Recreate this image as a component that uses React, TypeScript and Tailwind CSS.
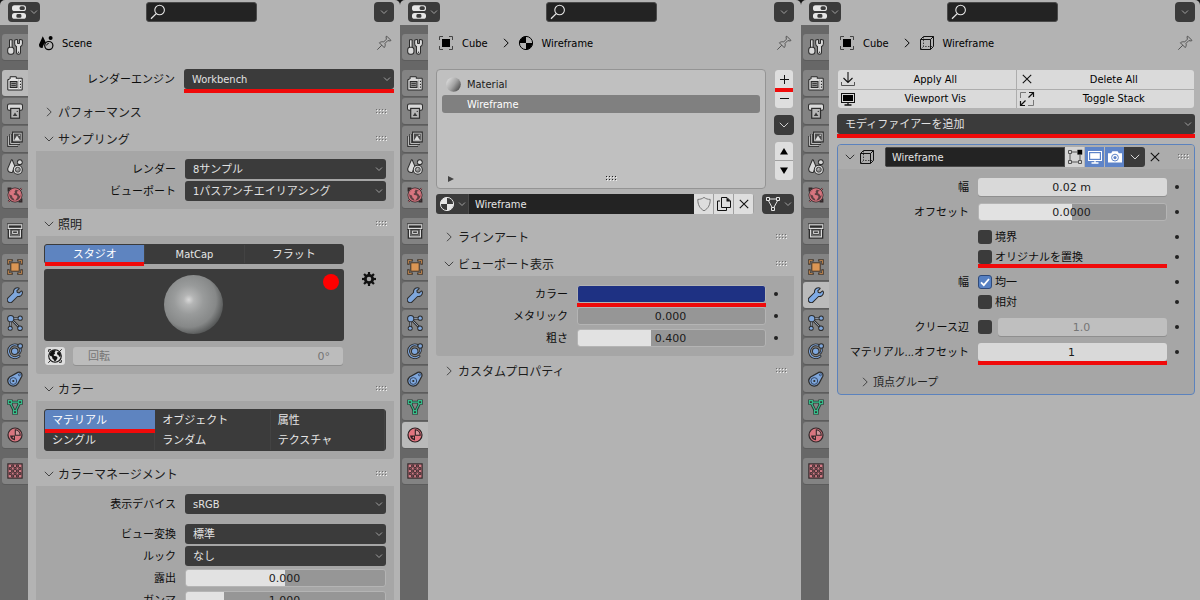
import { useId, useState } from "react";
import type { ReactNode } from "react";

/* ---------- drawings ---------- */

function Svg({ children, size = 16, className = "" }: { children: ReactNode; size?: number; className?: string }) {
  return (
    <svg width={size} height={size} viewBox="0 0 16 16" fill="none" className={"shrink-0 " + className} aria-hidden="true">
      {children}
    </svg>
  );
}

function Chevron({ dir = "down", className = "" }: { dir?: "down" | "right"; className?: string }) {
  return (
    <svg width="10" height="10" viewBox="0 0 10 10" fill="none" stroke="currentColor" strokeWidth="1" className={"shrink-0 " + className} aria-hidden="true">
      <path d={dir === "down" ? "M0.8 2.8 5 7 9.2 2.8" : "M3 0.8 7.2 5 3 9.2"} />
    </svg>
  );
}

function SmallChevron({ className = "" }: { className?: string }) {
  return (
    <svg width="8" height="8" viewBox="0 0 8 8" fill="none" stroke="#a0a0a0" strokeWidth="1" className={"pointer-events-none shrink-0 " + className} aria-hidden="true">
      <path d="M1 2.5 4 5.5 7 2.5" />
    </svg>
  );
}

function Grip({ dark = false }: { dark?: boolean }) {
  const xs = [0, 3, 6, 9];
  return (
    <svg width="12" height="6" viewBox="0 0 12 6" className="shrink-0" aria-hidden="true">
      {xs.map((x) => (
        <g key={x}>
          <rect x={x} y="0" width="1" height="1" fill={dark ? "#222" : "#707070"} />
          <rect x={x} y="3" width="1" height="1" fill={dark ? "#222" : "#707070"} />
          <rect x={x + 1} y="1" width="1" height="1" fill="#f2f2f2" />
          <rect x={x + 1} y="4" width="1" height="1" fill="#f2f2f2" />
        </g>
      ))}
    </svg>
  );
}

const wrench =
  "M10.2 1.2C8 1.4 6.6 3.4 7.1 5.6L1.4 11.2C.5 12.2.6 13.6 1.5 14.5S3.9 15.4 4.8 14.5L10.4 8.9C12.7 9.4 14.8 8 15 5.7L14.6 4.4 12.2 6.4 9.8 5.8 9.3 3.5 11.6 1.4Z";

const globeLand =
  "M2.2 6.4 4.2 3.4 6.8 2 9 2.6 7.6 4.2 8 5.8 6.4 7 7.4 8 9.4 8.2 10.6 9.8 9.4 12 7.8 13.8 6.8 11.8 5.4 10.6 5 8.6 3.4 8ZM10.2 4.2 12.4 4 13.8 6.4 13.6 8.6 12.2 8.8 11.4 7 10 6.2Z";

function OutlinedGroup({ fill, children }: { fill: string; children: ReactNode }) {
  return (
    <g fill={fill} stroke="#242424" strokeWidth="2" strokeLinejoin="round" style={{ paintOrder: "stroke" }}>
      {children}
    </g>
  );
}

const tabIcons: Record<string, ReactNode> = {
  tool: (
    <OutlinedGroup fill="#e4e4e4">
      <path d="M3 1.2H4.6V8.4H3Z" />
      <rect x="1.2" y="8.8" width="5.2" height="6" rx="2" />
      <path d="M8.2 1.4V4.6C8.2 5.9 9 6.8 10 7.2V13.6C10 15.2 13 15.2 13 13.6V7.2C14 6.8 14.9 5.9 14.9 4.6V1.4L13 1V4.4L12.2 5H10.8L10 4.4V1Z" />
      <circle cx="11.5" cy="13.2" r=".7" fill="#242424" stroke="none" />
    </OutlinedGroup>
  ),
  render: (
    <>
      <OutlinedGroup fill="#e4e4e4">
        <path d="M1.3 5.2 3.6 3.8V2.2H8.8V3.8H14.7V14.6H1.3Z" />
      </OutlinedGroup>
      <path d="M11.6 4.4V14.4" stroke="#b0b0b0" strokeWidth=".8" />
      <rect x="3.2" y="6.5" width="6.8" height="6" fill="#8e8e8e" stroke="#242424" />
      <path d="M4.4 8.5H8.8M4.4 10.5H8.8" stroke="#242424" strokeWidth=".8" />
      <path d="M12.9 6.4H14M12.9 9.4H14M12.9 12.2H14" stroke="#242424" strokeWidth="1.2" />
    </>
  ),
  output: (
    <>
      <OutlinedGroup fill="#e4e4e4">
        <rect x="1" y="1.5" width="14" height="5.2" rx="1.2" />
      </OutlinedGroup>
      <rect x="3.7" y="5.4" width="8.8" height="9.8" fill="#bdbdbd" stroke="#242424" strokeWidth="1.2" />
      <path d="M5.8 13 8 9.6 10.4 13Z" fill="#333" />
      <circle cx="10.3" cy="8.4" r=".7" fill="#333" />
    </>
  ),
  viewlayer: (
    <>
      <path d="M1.6 5V14.6H11M3.7 3V12.6H13" stroke="#242424" strokeWidth="2.6" />
      <path d="M1.6 5.2V14.6H10.8M3.7 3.2V12.6H12.8" stroke="#e4e4e4" strokeWidth=".9" />
      <rect x="5.6" y="1.1" width="9.6" height="9.8" fill="#e4e4e4" stroke="#242424" strokeWidth="1.2" />
      <rect x="7" y="2.5" width="6.8" height="7" fill="#444" />
      <path d="M7 9.5 10 4.4 13.2 9.5Z" fill="#e4e4e4" />
      <circle cx="12.2" cy="4.2" r=".8" fill="#e4e4e4" />
    </>
  ),
  scene: (
    <>
      <OutlinedGroup fill="#e4e4e4">
        <path d="M4.8 1.2 1.2 9.8C1 12.4 3 13.2 5 13 6 10 7 8.6 7.6 7.8Z" />
        <circle cx="12.8" cy="3.2" r="1.9" />
        <circle cx="10.8" cy="10.7" r="4" />
      </OutlinedGroup>
      <circle cx="10.8" cy="10.7" r="2.5" fill="#8e8e8e" stroke="#333" strokeWidth=".9" />
      <path d="M9.6 10.6 11.2 9.4" stroke="#e4e4e4" />
    </>
  ),
  world: (
    <>
      <path d="M1.3 14.7 3.4 12.7M14.7 1.3 12.6 3.4M14.5 11.6V14.5H11.6M1.5 4.4V1.5H4.4" stroke="#2b2022" strokeWidth="1.8" />
      <circle cx="8" cy="8" r="6.6" fill="#5c3a3e" stroke="#2b2022" strokeWidth="1.8" />
      <circle cx="8" cy="8" r="6.2" stroke="#e2747f" strokeWidth="1.2" />
      <path d={globeLand} fill="#e2747f" />
      <path d="M1.3 14.7 3.4 12.7M14.7 1.3 12.6 3.4" stroke="#e2747f" strokeWidth=".9" />
    </>
  ),
  collection: (
    <>
      <path d="M2.2 6.5V14.3H13.8V6.5" stroke="#242424" strokeWidth="3" />
      <rect x="1.2" y="1.8" width="13.6" height="3.6" stroke="#242424" strokeWidth="2.8" />
      <path d="M2.6 6.6V13.8H13.4V6.6" stroke="#e4e4e4" strokeWidth="1.2" />
      <rect x="1.2" y="1.8" width="13.6" height="3.6" fill="#242424" stroke="#e4e4e4" strokeWidth="1.2" />
      <rect x="5.6" y="8" width="4.8" height="2.4" stroke="#242424" strokeWidth="2.4" />
      <rect x="5.6" y="8" width="4.8" height="2.4" stroke="#e4e4e4" />
    </>
  ),
  object: (
    <>
      <path d="M1.4 4.6V1.4H4.6M11.4 1.4H14.6V4.6M14.6 11.4V14.6H11.4M4.6 14.6H1.4V11.4" stroke="#3a2c20" strokeWidth="2.4" strokeLinecap="square" />
      <path d="M1.4 4.6V1.4H4.6M11.4 1.4H14.6V4.6M14.6 11.4V14.6H11.4M4.6 14.6H1.4V11.4" stroke="#d8924f" strokeWidth=".9" />
      <rect x="3.8" y="3.8" width="8.4" height="8.4" fill="#e6994f" stroke="#3a2c20" strokeWidth="1" />
    </>
  ),
  modifier: (
    <OutlinedGroup fill="#7fabe6">
      <path d={wrench} />
    </OutlinedGroup>
  ),
  particles: (
    <>
      <path d="M3.6 3.6 13.2 3.2M3.6 3.6 3.2 13M3.6 3.6 13 13.2" stroke="#242424" strokeWidth="2.4" />
      <path d="M3.6 3.6 13.2 3.2M3.6 3.6 3.2 13M3.6 3.6 13 13.2" stroke="#a8b8d0" strokeWidth=".9" />
      <OutlinedGroup fill="#7fabe6">
        <circle cx="3.7" cy="3.7" r="2.6" />
        <circle cx="13.2" cy="3.2" r="1.6" />
        <circle cx="3.2" cy="13.2" r="1.5" />
        <circle cx="13" cy="13.2" r="1.8" />
      </OutlinedGroup>
    </>
  ),
  physics: (
    <>
      <path d="M10 2.2A6.4 6.4 0 1 0 12 13.2" stroke="#242424" strokeWidth="2.8" strokeLinecap="round" />
      <path d="M10 2.2A6.4 6.4 0 1 0 12 13.2" stroke="#7fabe6" strokeWidth="1.1" strokeLinecap="round" />
      <path d="M13.8 5C14 7.6 13.2 9.4 11.6 10.8" stroke="#242424" strokeWidth="2.4" />
      <path d="M13.8 5C14 7.6 13.2 9.4 11.6 10.8" stroke="#7fabe6" strokeWidth=".9" />
      <OutlinedGroup fill="#7fabe6">
        <circle cx="7.7" cy="8.2" r="2.7" />
        <circle cx="13.2" cy="3" r="1.8" />
      </OutlinedGroup>
    </>
  ),
  constraint: (
    <>
      <path d="M2.6 6 10.8 1.4C13.4.4 15.6 2.6 14.8 5.2L11 12.4C9 15.8 4 15.8 2 13.2 .4 11 .6 8 2.6 6Z" fill="#7fabe6" stroke="#242424" strokeWidth="1.2" />
      <circle cx="6.3" cy="10" r="3.4" fill="#7fabe6" stroke="#2c4468" strokeWidth="1" />
      <circle cx="6.3" cy="10" r="1.1" fill="#242424" />
      <circle cx="12.4" cy="3.8" r="1" stroke="#2c4468" strokeWidth=".9" />
    </>
  ),
  data: (
    <>
      <path d="M4 3.2H12M3.4 4.4 7.2 12M12.6 4.4 8.8 12" stroke="#24332d" strokeWidth="2.8" />
      <g stroke="#24332d" strokeWidth="2.4">
        <path d="M1.4 1.6H4.4V4.6H1.4ZM11.6 1.6H14.6V4.6H11.6ZM6.5 11.6H9.5V14.6H6.5Z" />
      </g>
      <path d="M4.4 3.1H11.6M3.5 4.6 7.1 11.6M12.5 4.6 8.9 11.6" stroke="#2fc48c" strokeWidth="1.1" />
      <path d="M1.4 1.6H4.4V4.6H1.4ZM11.6 1.6H14.6V4.6H11.6ZM6.5 11.6H9.5V14.6H6.5Z" fill="#24332d" stroke="#2fc48c" strokeWidth="1.1" />
    </>
  ),
  material: (
    <>
      <circle cx="8" cy="8" r="7" fill="#e2747f" stroke="#2b2022" strokeWidth="1.2" />
      <path d="M8.3 2.8A5.4 5.4 0 0 1 13.2 8.2H8.3Z" fill="#d8979d" stroke="#2b2022" strokeWidth="1.1" />
      <path d="M3 8.6H8V13.2C5.6 13.4 3.4 11.6 3 8.6Z" fill="#2b2022" />
      <path d="M5.2 10.2 7 9.6V11.8Z" fill="#e2747f" />
    </>
  ),
  texture: (
    <>
      <rect x=".9" y=".9" width="14.2" height="14.2" fill="#dd7c88" stroke="#2b2022" strokeWidth="1.2" />
      <path
        d="M4.7 2h2v2h-2ZM9.4 2h2v2h-2ZM2.3 4.6h2v2h-2ZM7.1 4.6h2v2h-2ZM11.8 4.6h2v2h-2ZM4.7 7.1h2v2h-2ZM9.4 7.1h2v2h-2ZM2.3 9.6h2v2h-2ZM7.1 9.6h2v2h-2ZM11.8 9.6h2v2h-2ZM4.7 12h2v2h-2ZM9.4 12h2v2h-2Z"
        fill="#b05c67"
        stroke="#2b2022"
        strokeWidth=".9"
      />
    </>
  ),
};

function SceneIcon() {
  return (
    <Svg size={16}>
      <path d="M4.8 1.2 1 9.6C.8 12.4 2.6 13.2 4.6 13 5 10.4 6 8.6 7.8 7.4Z" fill="#000" />
      <circle cx="12.6" cy="3" r="2" fill="#000" />
      <circle cx="10.8" cy="10.6" r="4.1" stroke="#000" strokeWidth="1.2" />
      <path d="M8.6 10.4A2.4 2.4 0 0 1 10.8 8.3" stroke="#000" strokeWidth=".9" />
    </Svg>
  );
}

function CubeObjectIcon() {
  return (
    <Svg>
      <rect x="4" y="4" width="8" height="8" fill="#000" />
      <path d="M1.5 5V1.5H5M11 1.5H14.5V5M14.5 11V14.5H11M5 14.5H1.5V11" stroke="#444" />
    </Svg>
  );
}

function MaterialBallIcon({ light = false }: { light?: boolean }) {
  const c = light ? "#e6e6e6" : "#000";
  return (
    <Svg>
      <circle cx="8" cy="8" r="6.6" stroke={c} strokeWidth="1" />
      <path d="M8 8V1.5A6.5 6.5 0 0 0 1.5 8ZM8 8H14.5A6.5 6.5 0 0 1 8 14.5Z" fill={c} />
    </Svg>
  );
}

function WireCubeIcon() {
  return (
    <Svg>
      <g stroke="#111" strokeWidth="1">
        <path d="M1.5 4.5H11.5V14.5H1.5ZM1.5 4.5 4.5 1.5H14.5L11.5 4.5M14.5 1.5V11.5L11.5 14.5" />
        <path d="M4.5 2V11.5H14M4.5 11.5 2 14" strokeDasharray="1.4 1.4" strokeOpacity=".75" />
      </g>
    </Svg>
  );
}

function PinIcon() {
  return (
    <Svg>
      <path d="M1.3 14.7 5.8 10.2M3.4 7.8C4.8 6.7 6.4 6.5 7.6 7L10.4 4.2 10 1.6 10.8 1.2 14.8 5.2 14.4 6 11.8 5.6 9 8.4C9.5 9.6 9.3 11.2 8.2 12.6Z" stroke="#4a4a4a" strokeWidth=".9" strokeLinejoin="round" />
    </Svg>
  );
}

function GlobeIcon() {
  return (
    <Svg>
      <circle cx="8" cy="8" r="6.3" stroke="#111" strokeWidth="1.1" />
      <path d={globeLand} fill="#111" />
      <path d="M1.3 14.7 3.4 12.7M14.7 1.3 12.6 3.4M14.3 12V14.3H12M1.7 4V1.7H4" stroke="#111" strokeWidth=".9" />
    </Svg>
  );
}

function GearIcon() {
  const teeth = [0, 45, 90, 135, 180, 225, 270, 315];
  return (
    <Svg>
      {teeth.map((a) => (
        <rect key={a} x="6.9" y="1" width="2.2" height="4" fill="#111" transform={`rotate(${a} 8 8)`} />
      ))}
      <circle cx="8" cy="8" r="3.7" stroke="#111" strokeWidth="2.8" />
    </Svg>
  );
}

function CrossIcon() {
  return (
    <Svg>
      <path d="M3.8 3.8 12.2 12.2M12.2 3.8 3.8 12.2" stroke="#111" strokeWidth="1.1" />
    </Svg>
  );
}

/* ---------- basic controls ---------- */

const latin = "font-['DejaVu_Sans_Condensed','DejaVu_Sans','Noto_Sans_CJK_JP',sans-serif]";
const digits = "font-['DejaVu_Sans','Noto_Sans_CJK_JP',sans-serif]";

function Mark({ className = "inset-x-0 -bottom-1" }: { className?: string }) {
  return <span aria-hidden="true" className={"pointer-events-none absolute z-10 h-1 bg-[#f00a0a] " + className} />;
}

function Select({ id, value, label, mark = false }: { id?: string; value: string; label?: string; mark?: boolean }) {
  return (
    <div className="relative flex h-5 w-full items-center">
      <select id={id} aria-label={label} className="h-5 w-full appearance-none rounded-[3px] bg-[#3b3b3b] px-2 pt-0.5 text-[11px] text-[#e2e2e2]">
        <option>{value}</option>
      </select>
      <SmallChevron className="absolute right-[3px]" />
      {mark && <Mark />}
    </div>
  );
}

function Row({ label, cols, children, dot = false }: { label: string; cols: string; children: (id: string) => ReactNode; dot?: boolean }) {
  const id = useId();
  return (
    <div className={"grid h-5 items-center " + cols}>
      <label htmlFor={id} className="truncate pt-0.5 pr-[9px] text-right">
        {label}
      </label>
      {children(id)}
      {dot && (
        <span className="flex justify-center">
          <span className="size-1 rounded-full bg-[#222]" />
        </span>
      )}
    </div>
  );
}

function NumberField({ id, value, fill, plain = false, disabled = false, mark = false }: { id: string; value: string; fill?: number; plain?: boolean; disabled?: boolean; mark?: boolean }) {
  const tone = disabled ? "bg-[#bfbfbf] text-[#757575]" : plain ? "bg-[#d9d9d9] text-[#1a1a1a]" : "bg-[#969696] text-[#1a1a1a]";
  return (
    <div className="relative h-5 w-full py-px">
      <div className={"relative h-full w-full overflow-hidden rounded-[3px] " + (plain || disabled ? "shadow-[0_1px_0_#8f8f8f] " : "border border-[#b4b4b4] ") + tone}>
        {fill !== undefined && <div className="absolute inset-y-0 left-0 bg-[#e2e2e2]" style={{ width: `${fill}%` }} />}
        <input id={id} defaultValue={value} disabled={disabled} className={"absolute inset-0 w-full bg-transparent pt-px pr-0.5 text-center text-[11px] " + digits} />
      </div>
      {mark && <Mark className="inset-x-0 -bottom-[3px]" />}
    </div>
  );
}

function Check({ id, label, checked = false }: { id?: string; label?: string; checked?: boolean }) {
  const own = useId();
  const key = id ?? own;
  return (
    <span className="flex items-center gap-[3px]">
      <span className="relative flex size-[14px]">
        <input id={key} type="checkbox" defaultChecked={checked} className="peer size-[14px] appearance-none rounded-[3px] bg-[#3b3b3b] checked:border checked:border-[#2f4a7a] checked:bg-[#5680c2]" />
        <svg viewBox="0 0 14 14" className="pointer-events-none absolute inset-0 hidden size-[14px] peer-checked:block" aria-hidden="true">
          <path d="M3 7.4 5.8 10.2 11 4" fill="none" stroke="#fff" strokeWidth="1.8" />
        </svg>
      </span>
      {label && (
        <label htmlFor={key} className="pt-0.5">
          {label}
        </label>
      )}
    </span>
  );
}

function SectionHeader({ title, open = false }: { title: string; open?: boolean }) {
  return (
    <button type="button" aria-expanded={open} className="flex h-[25px] w-full items-center gap-1 pr-[6px] pl-2 text-[12px] text-[#1c1c1c]">
      <Chevron dir={open ? "down" : "right"} className="text-[#444]" />
      <span className="flex-1 pt-0.5 text-left">{title}</span>
      <Grip />
    </button>
  );
}

/* ---------- editor frame ---------- */

const tabGroups: [string, string][][] = [
  [["tool", "Tool"]],
  [["render", "Render"], ["output", "Output"], ["viewlayer", "View Layer"], ["scene", "Scene"], ["world", "World"]],
  [["collection", "Collection"]],
  [["object", "Object"], ["modifier", "Modifiers"], ["particles", "Particles"], ["physics", "Physics"], ["constraint", "Constraints"], ["data", "Data"], ["material", "Material"]],
  [["texture", "Texture"]],
];

function Editor({ active, crumb, pad, children }: { active: string; crumb: ReactNode; pad: string; children: ReactNode }) {
  return (
    <section className="flex min-w-0 flex-col overflow-hidden rounded-t-[5px] bg-[#b3b3b3]">
      <header className={"grid h-[25px] shrink-0 grid-cols-[1fr_auto_1fr] items-start pt-0.5 pl-2 " + pad}>
        <button type="button" aria-label="Editor type" className="flex h-5 w-8 items-center justify-center gap-[3px] rounded-[4px] bg-[#3b3b3b]">
          <Svg>
            <rect x="1" y="1.2" width="14" height="5.8" rx="2.6" fill="#e6e6e6" />
            <rect x="1" y="9" width="14" height="5.8" rx="2.6" fill="#e6e6e6" />
            <rect x="8.6" y="2.2" width="5.2" height="3.8" rx="1.6" fill="#3b3b3b" />
            <rect x="5.4" y="10" width="5" height="3.8" rx="1.4" fill="#3b3b3b" />
          </Svg>
          <SmallChevron />
        </button>
        <label className="flex h-5 w-[111px] items-center rounded-[3px] border border-[#4a4a4a] bg-[#232323] pl-[3px]">
          <Svg>
            <circle cx="9.6" cy="6" r="4.8" stroke="#e6e6e6" strokeWidth="1.1" />
            <path d="M6.2 9.6 1 14.8" stroke="#e6e6e6" strokeWidth="1.3" />
          </Svg>
          <input type="search" aria-label="Search" className="w-full min-w-0 bg-transparent text-[11px] text-white outline-none" />
        </label>
        <button type="button" aria-label="Options" className="flex size-5 items-center justify-center justify-self-end rounded-[4px] bg-[#3b3b3b]">
          <SmallChevron />
        </button>
      </header>
      <div className="flex min-h-0 flex-1">
        <nav className="flex w-7 shrink-0 flex-col gap-[10px] bg-[#676767] pt-[9px] pl-0.5">
          {tabGroups.map((group, i) => (
            <div key={i} className="flex flex-col gap-0.5">
              {group.map(([icon, name]) => (
                <button
                  key={icon}
                  type="button"
                  aria-label={name}
                  className={"flex h-[26px] items-center justify-center rounded-l-[3px] shadow-[0_1px_0_#5c5c5c] " + (icon === active ? "bg-[#bababa]" : "bg-[#838383]")}
                >
                  <Svg className={icon === active ? "" : "opacity-90"}>{tabIcons[icon]}</Svg>
                </button>
              ))}
            </div>
          ))}
        </nav>
        <div className={"flex min-w-0 flex-1 flex-col overflow-hidden pl-2 " + pad}>
          <div className="flex h-9 shrink-0 items-center pl-0.5 text-black">
            {crumb}
            <button type="button" aria-label="Pin" className="mr-0.5 ml-auto">
              <PinIcon />
            </button>
          </div>
          <div className="h-2 shrink-0" />
          {children}
        </div>
      </div>
    </section>
  );
}

/* ---------- render properties ---------- */

const boxCols = "grid-cols-[141fr_201fr]";

function RenderEditor() {
  const [light, setLight] = useState("スタジオ");
  const colors = ["マテリアル", "オブジェクト", "属性", "シングル", "ランダム", "テクスチャ"];
  const [color, setColor] = useState(colors[0]);
  return (
    <Editor
      active="render"
      pad="pr-[6px]"
      crumb={
        <>
          <SceneIcon />
          <span className="ml-2 pt-px">Scene</span>
        </>
      }
    >
      <Row label="レンダーエンジン" cols="shrink-0 grid-cols-[148fr_210fr]">
        {(id) => <Select id={id} value="Workbench" mark />}
      </Row>
      <div className="mt-[10px] flex shrink-0 flex-col gap-0.5">
        <SectionHeader title="パフォーマンス" />
        <div>
          <SectionHeader title="サンプリング" open />
          <div className="flex flex-col gap-0.5 rounded-b-[3px] bg-[#a6a6a6] p-2">
            <Row label="レンダー" cols={boxCols}>{(id) => <Select id={id} value="8サンプル" />}</Row>
            <Row label="ビューポート" cols={boxCols}>{(id) => <Select id={id} value="1パスアンチエイリアシング" />}</Row>
          </div>
        </div>
        <div>
          <SectionHeader title="照明" open />
          <div className="grid grid-cols-[300fr_42fr] gap-y-[5px] rounded-b-[3px] bg-[#a6a6a6] p-2">
            <div className="grid h-5 grid-cols-3 rounded-[3px] border border-[#3b3b3b] bg-[#3b3b3b]">
              {["スタジオ", "MatCap", "フラット"].map((t) => (
                <button
                  key={t}
                  type="button"
                  aria-pressed={t === light}
                  onClick={() => setLight(t)}
                  className={"relative pt-px " + (t === light ? "rounded-l-[2px] bg-[#5e84c0] text-white" : "border-l border-[#434343] text-[#e6e6e6]")}
                >
                  {t}
                  {t === light && <Mark className="inset-x-0 -bottom-[3px]" />}
                </button>
              ))}
            </div>
            <div />
            <div className="relative flex h-[72px] items-center justify-center rounded-[3px] bg-[#3b3b3b]">
              <svg width="60" height="60" viewBox="0 0 60 60" aria-hidden="true">
                <defs>
                  <radialGradient id="studio" cx=".42" cy=".42" r=".62">
                    <stop offset="0" stopColor="#d8d8d8" />
                    <stop offset=".14" stopColor="#b4b5b5" />
                    <stop offset=".4" stopColor="#999b9b" />
                    <stop offset=".75" stopColor="#868888" />
                    <stop offset="1" stopColor="#505252" />
                  </radialGradient>
                </defs>
                <circle cx="29.5" cy="29.5" r="29.5" fill="url(#studio)" />
              </svg>
              <span className="absolute top-[5px] right-[5px] size-4 rounded-full bg-[#ff0000]" />
            </div>
            <button type="button" aria-label="Settings" className="ml-[17px] h-5 self-start">
              <GearIcon />
            </button>
            <div className="flex h-5 items-center gap-2 px-px">
              <button type="button" aria-label="World space lighting" className="flex h-[18px] w-5 items-center justify-center rounded-[3px] bg-[#dedede]">
                <GlobeIcon />
              </button>
              <label className="flex h-[18px] flex-1 items-center rounded-[3px] bg-[#bcbcbc] pt-0.5 pr-[13px] pl-[15px] text-[#757575] shadow-[0_1px_0_#8f8f8f]">
                回転
                <input disabled defaultValue="0°" className={"min-w-0 flex-1 bg-transparent text-right text-[11px] " + digits} />
              </label>
            </div>
          </div>
        </div>
        <div>
          <SectionHeader title="カラー" open />
          <div className="rounded-b-[3px] bg-[#a6a6a6] p-2">
            <div className="grid h-[42px] grid-cols-[111fr_116fr_115fr] grid-rows-2 rounded-[3px] border border-[#3b3b3b] bg-[#3b3b3b]">
              {colors.map((t) => (
                <button
                  key={t}
                  type="button"
                  aria-pressed={t === color}
                  onClick={() => setColor(t)}
                  className={"relative pt-px text-left " + (t === color ? "rounded-tl-[2px] bg-[#5e84c0] pl-[7px] text-white" : "border-r border-[#434343] pl-[7px] text-[#e6e6e6]")}
                >
                  {t}
                  {t === color && <Mark className="inset-x-0 -bottom-[3px]" />}
                </button>
              ))}
            </div>
          </div>
        </div>
        <div>
          <SectionHeader title="カラーマネージメント" open />
          <div className="flex flex-col gap-0.5 bg-[#a6a6a6] p-2">
            <Row label="表示デバイス" cols={boxCols}>{(id) => <Select id={id} value="sRGB" />}</Row>
            <div className="mt-2 flex flex-col gap-0.5">
              <Row label="ビュー変換" cols={boxCols}>{(id) => <Select id={id} value="標準" />}</Row>
              <Row label="ルック" cols={boxCols}>{(id) => <Select id={id} value="なし" />}</Row>
              <Row label="露出" cols={boxCols}>{(id) => <NumberField id={id} value="0.000" fill={49.5} />}</Row>
              <Row label="ガンマ" cols={boxCols}>{(id) => <NumberField id={id} value="1.000" fill={19} />}</Row>
            </div>
          </div>
        </div>
      </div>
    </Editor>
  );
}

/* ---------- material properties ---------- */

const fieldCols = "grid-cols-[133fr_189fr_20px]";
const lightButton = "flex items-center justify-center bg-[#dedede]";

function MaterialEditor() {
  return (
    <Editor
      active="material"
      pad="pr-[7px]"
      crumb={
        <>
          <CubeObjectIcon />
          <span className="ml-2 pt-px">Cube</span>
          <Chevron dir="right" className="mr-[7px] ml-[13px]" />
          <MaterialBallIcon />
          <span className="ml-2 pt-px">Wireframe</span>
        </>
      }
    >
      <div className="flex shrink-0 gap-2">
        <div className="relative flex h-[120px] flex-1 flex-col rounded-[4px] border border-[#949494] bg-[#c0c0c0] px-[5px] pt-1 text-[#1a1a1a]">
          <button type="button" className="flex h-[21px] items-center gap-[6px] pl-1">
            <svg width="15" height="15" viewBox="0 0 15 15" aria-hidden="true">
              <defs>
                <linearGradient id="ball" x1=".1" y1=".2" x2=".95" y2=".8">
                  <stop offset="0" stopColor="#d6d6d6" />
                  <stop offset=".5" stopColor="#a2a2a2" />
                  <stop offset="1" stopColor="#4c4c4c" />
                </linearGradient>
              </defs>
              <circle cx="7.5" cy="7.5" r="7.3" fill="url(#ball)" />
            </svg>
            Material
          </button>
          <button type="button" className="flex h-[18px] items-center rounded-[3px] bg-[#808080] pt-px pl-[25px] text-white">
            Wireframe
          </button>
          <div className="mt-auto flex h-[18px] items-center pl-[6px]">
            <svg width="6" height="6" viewBox="0 0 6 6" aria-hidden="true">
              <path d="M0 0 6 3 0 6Z" fill="#444" />
            </svg>
            <div className="flex flex-1 justify-center pl-[10px]">
              <Grip dark />
            </div>
          </div>
        </div>
        <div className="flex w-5 flex-col items-center">
          <div className="relative mt-px flex w-[18px] flex-col gap-px overflow-hidden rounded-[3px] bg-[#a0a0a0]">
            <button type="button" aria-label="Add slot" className={lightButton + " h-[18px]"}>
              <Svg>
                <path d="M8.5 4V13M4 8.5H13" stroke="#111" />
              </Svg>
            </button>
            <button type="button" aria-label="Remove slot" className={lightButton + " h-[19px]"}>
              <Svg>
                <path d="M4 7.5H13" stroke="#111" />
              </Svg>
            </button>
            <Mark className="inset-x-0 top-[18px]" />
          </div>
          <button type="button" aria-label="Material specials" className="mt-[7px] flex size-5 items-center justify-center rounded-[4px] bg-[#3b3b3b] text-[#d0d0d0]">
            <Chevron />
          </button>
          <div className="mt-[7px] flex w-[18px] flex-col gap-px overflow-hidden rounded-[3px] bg-[#a0a0a0]">
            <button type="button" aria-label="Move up" className={lightButton + " h-[18px]"}>
              <Svg>
                <path d="M8 5 12 11.5H4Z" fill="#000" />
              </Svg>
            </button>
            <button type="button" aria-label="Move down" className={lightButton + " h-[19px]"}>
              <Svg>
                <path d="M8 11 4 4.5H12Z" fill="#000" />
              </Svg>
            </button>
          </div>
        </div>
      </div>

      <div className="mt-[5px] flex h-5 shrink-0 items-center gap-2">
        <div className="flex h-5 flex-1 overflow-hidden rounded-[3px]">
          <button type="button" aria-label="Browse material" className="flex w-8 items-center justify-center gap-[3px] bg-[#3b3b3b]">
            <MaterialBallIcon light />
            <SmallChevron />
          </button>
          <input aria-label="Material name" defaultValue="Wireframe" className={"min-w-0 flex-1 border-l border-[#4a4a4a] bg-[#232323] px-[6px] pt-px text-[11px] text-[#e6e6e6] " + latin} />
          <div className="flex gap-px bg-[#a0a0a0] pr-px">
            <button type="button" aria-label="Fake user" className={lightButton + " w-[19px]"}>
              <Svg>
                <path d="M8 1.4C6.2 2.8 4 3.4 1.8 3.4 1.8 8.6 3.6 12.4 8 14.8 12.4 12.4 14.2 8.6 14.2 3.4 12 3.4 9.8 2.8 8 1.4Z" stroke="#777" />
              </Svg>
            </button>
            <button type="button" aria-label="Duplicate material" className={lightButton + " w-[19px]"}>
              <Svg>
                <path d="M4 5H1.5V14.5H10.5V12" stroke="#111" />
                <path d="M5.5 1.5H11L14.5 5V11.5H5.5Z" stroke="#111" />
                <path d="M10.5 1.5V5.5H14.8Z" fill="#111" />
              </Svg>
            </button>
            <button type="button" aria-label="Unlink material" className={lightButton + " w-[19px]"}>
              <CrossIcon />
            </button>
          </div>
        </div>
        <button type="button" aria-label="Material link" className="flex h-5 w-8 items-center justify-center gap-[3px] rounded-[4px] bg-[#3b3b3b]">
          <Svg>
            <path d="M4.5 3H11.5M3.6 5 7.2 11.5M12.4 5 8.8 11.5M1.5 1.5H4.5V4.5H1.5ZM11.5 1.5H14.5V4.5H11.5ZM6.5 11.5H9.5V14.5H6.5Z" stroke="#e6e6e6" />
          </Svg>
          <SmallChevron />
        </button>
      </div>

      <div className="mt-[10px] flex shrink-0 flex-col gap-0.5">
        <SectionHeader title="ラインアート" />
        <div>
          <SectionHeader title="ビューポート表示" open />
          <div className="flex flex-col gap-0.5 rounded-b-[3px] bg-[#a6a6a6] p-2">
            <Row label="カラー" cols={fieldCols} dot>
              {(id) => (
                <div className="relative h-5 py-px">
                  <button id={id} type="button" aria-label="カラー" className="block h-full w-full rounded-[3px] border border-[#b4b4b4] bg-[#1e3183]" />
                  <Mark className="inset-x-0 -bottom-[3px]" />
                </div>
              )}
            </Row>
            <Row label="メタリック" cols={fieldCols} dot>{(id) => <NumberField id={id} value="0.000" />}</Row>
            <Row label="粗さ" cols={fieldCols} dot>{(id) => <NumberField id={id} value="0.400" fill={39} />}</Row>
          </div>
        </div>
        <SectionHeader title="カスタムプロパティ" />
      </div>
    </Editor>
  );
}

/* ---------- modifier properties ---------- */

const modCols = "grid-cols-[140fr_189fr_20px]";

function ActionButton({ icon, children }: { icon: ReactNode; children: ReactNode }) {
  return (
    <button type="button" className="flex items-center bg-[#dadada] pr-px pl-0.5 text-black">
      {icon}
      <span className="flex-1 pt-px text-center">{children}</span>
    </button>
  );
}

function ModifierEditor() {
  return (
    <Editor
      active="modifier"
      pad="pr-[5px]"
      crumb={
        <>
          <CubeObjectIcon />
          <span className="ml-2 pt-px">Cube</span>
          <Chevron dir="right" className="mr-[7px] ml-[13px]" />
          <WireCubeIcon />
          <span className="ml-2 pt-px">Wireframe</span>
        </>
      }
    >
      <div className="mx-px mt-px grid h-[38px] shrink-0 grid-cols-2 grid-rows-2 gap-px overflow-hidden rounded-[3px] bg-[#adadad]">
        <ActionButton
          icon={
            <Svg>
              <path d="M8 1V11M3.5 7 8 11.4 12.5 7" stroke="#111" strokeWidth="1.1" />
              <path d="M1.5 11V14.5H14.5V11" stroke="#555" />
            </Svg>
          }
        >
          Apply All
        </ActionButton>
        <ActionButton icon={<CrossIcon />}>Delete All</ActionButton>
        <ActionButton
          icon={
            <Svg>
              <rect x="1.5" y="2.5" width="13" height="9" stroke="#111" />
              <rect x="3" y="4" width="10" height="6" fill="#000" />
              <path d="M8 12V14M4.5 14H11.5" stroke="#111" strokeWidth="1.3" />
            </Svg>
          }
        >
          Viewport Vis
        </ActionButton>
        <ActionButton
          icon={
            <Svg>
              <path d="M9.5 6.5 14.5 1.5M10 1.5H14.5V6M6.5 9.5 1.5 14.5M6 14.5H1.5V10" stroke="#111" strokeWidth="1.2" />
              <path d="M7 1.5H1.5V7M9 14.5H14.5V9" stroke="#777" />
            </Svg>
          }
        >
          Toggle Stack
        </ActionButton>
      </div>
      <div className="mt-[6px] shrink-0">
        <Select label="Add modifier" value="モディファイアーを追加" mark />
      </div>

      <div className="mt-[10px] flex shrink-0 flex-col rounded-[4px] border border-[#5b82bd] bg-[#a6a6a6]">
        <div className="flex h-6 items-center rounded-t-[3px] bg-[#acacac] pr-1 pl-[7px]">
          <button type="button" aria-label="Collapse" className="text-[#333]">
            <Chevron className="block" />
          </button>
          <span className="ml-1">
            <WireCubeIcon />
          </span>
          <div className="ml-[10px] flex h-5 min-w-0 flex-1 overflow-hidden rounded-[3px]">
            <input aria-label="Modifier name" defaultValue="Wireframe" className={"min-w-0 flex-1 border border-[#4a4a4a] bg-[#232323] px-[6px] pt-px text-[11px] text-[#e6e6e6] " + latin} />
            <div className="flex gap-px bg-[#b8b8b8]">
              <button type="button" aria-label="Edit mode" className="flex w-[19px] items-center justify-center bg-[#d4d4d4]">
                <Svg>
                  <path d="M3 5V11M5 3H10M13 6V11M5 13H11M1.5 1.5H4.5V4.5H1.5ZM1.5 11.5H4.5V14.5H1.5ZM11.5 11.5H14.5V14.5H11.5Z" stroke="#555" />
                  <rect x="10.4" y=".8" width="4.8" height="4.8" fill="#000" />
                </Svg>
              </button>
              <button type="button" aria-label="Realtime" className="flex w-[19px] items-center justify-center bg-[#5e84c8]">
                <Svg>
                  <rect x="1.5" y="2.5" width="13" height="9" stroke="#fff" />
                  <rect x="3.2" y="4.2" width="9.6" height="5.6" fill="#fff" />
                  <path d="M8 12V14M4.5 14H11.5" stroke="#fff" strokeWidth="1.3" />
                </Svg>
              </button>
              <button type="button" aria-label="Render" className="flex w-[19px] items-center justify-center bg-[#5e84c8]">
                <Svg>
                  <path d="M1 4.2H4.2L5.4 2.2H10.6L11.8 4.2H15V13.6H1Z" fill="#fff" />
                  <circle cx="8" cy="8.6" r="3.4" stroke="#5e84c8" />
                  <circle cx="8" cy="8.6" r="1.6" fill="#5e84c8" />
                </Svg>
              </button>
              <button type="button" aria-label="More" className="-ml-px flex w-[21px] items-center justify-center bg-[#3b3b3b] text-[#d8d8d8]">
                <Chevron />
              </button>
            </div>
          </div>
          <button type="button" aria-label="Delete modifier" className="mr-[15px] ml-[2px]">
            <CrossIcon />
          </button>
          <Grip />
        </div>
        <div className="flex flex-col gap-[5px] pt-2 pr-[7px]">
          <Row label="幅" cols={modCols} dot>{(id) => <NumberField id={id} value="0.02 m" plain />}</Row>
          <Row label="オフセット" cols={modCols} dot>{(id) => <NumberField id={id} value="0.0000" fill={49.5} />}</Row>
          <div>
            <Row label="" cols={modCols} dot>{(id) => <Check id={id} label="境界" />}</Row>
            <Row label="" cols={modCols} dot>
              {(id) => (
                <div className="relative flex h-5 items-center">
                  <Check id={id} label="オリジナルを置換" />
                  <Mark className="inset-x-0 -bottom-px" />
                </div>
              )}
            </Row>
          </div>
          <div>
            <Row label="幅" cols={modCols} dot>{(id) => <Check id={id} label="均一" checked />}</Row>
            <Row label="" cols={modCols} dot>{(id) => <Check id={id} label="相対" />}</Row>
          </div>
          <Row label="クリース辺" cols={modCols} dot>
            {(id) => (
              <div className="flex items-center gap-[6px]">
                <Check id={id} />
                <NumberField id={id + "-value"} value="1.0" disabled />
              </div>
            )}
          </Row>
          <Row label="マテリアル...オフセット" cols={modCols} dot>{(id) => <NumberField id={id} value="1" plain mark />}</Row>
        </div>
        <button type="button" aria-expanded="false" className="mt-[10px] mb-0.5 flex h-5 items-center gap-[3px] pl-[22px] text-[#222]">
          <Chevron dir="right" className="text-[#444]" />
          <span className="pt-0.5">頂点グループ</span>
        </button>
      </div>
    </Editor>
  );
}

export default function App() {
  return (
    <main lang="ja" className={"grid h-screen grid-cols-[400fr_401fr_399fr] overflow-hidden bg-[#161616] text-[11px] leading-4 whitespace-nowrap text-[#0c0c0c] " + latin}>
      <RenderEditor />
      <MaterialEditor />
      <ModifierEditor />
    </main>
  );
}
